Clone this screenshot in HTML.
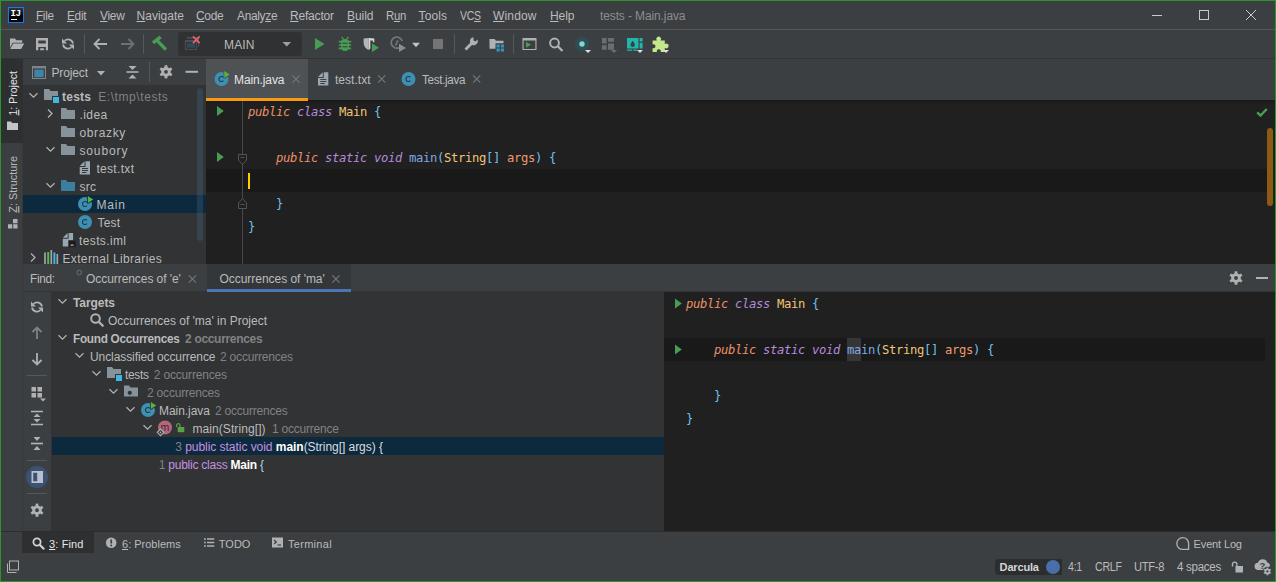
<!DOCTYPE html>
<html lang="en"><head><meta charset="utf-8"><title>tests - Main.java</title>
<style>
html,body{margin:0;padding:0;background:#3c3f41;}
body{width:1276px;height:582px;overflow:hidden;position:relative;font-family:'Liberation Sans', sans-serif;font-size:12px;color:#bbbbbb;}
.b{position:absolute;}
.t{position:absolute;white-space:pre;line-height:16px;font-family:'Liberation Sans', sans-serif;transform-origin:0 0;}
.t u{text-decoration:underline;text-underline-offset:1px;text-decoration-thickness:1px;}
.c{position:absolute;white-space:pre;line-height:23px;font-family:'DejaVu Sans Mono', 'Liberation Mono', monospace;font-size:12.2px;letter-spacing:-0.338px;}
svg{position:absolute;left:0;top:0;overflow:visible;}
</style></head><body>
<div class="b" style="left:1px;top:29px;width:1274px;height:1px;background:#555555;"></div>
<div class="b" style="left:1px;top:58px;width:1274px;height:1px;background:#323436;"></div>
<div class="b" style="left:178px;top:32px;width:124px;height:24px;background:#2f3133;border-radius:3px;"></div>
<div class="b" style="left:1px;top:59px;width:22px;height:84px;background:#2d2f30;"></div>
<div class="b" style="left:22px;top:143px;width:1px;height:388px;background:#37393b;"></div>
<div class="b" style="left:23px;top:85px;width:183px;height:179px;background:#313335;"></div>
<div class="b" style="left:23px;top:195px;width:183px;height:18px;background:#0d293e;"></div>
<div class="b" style="left:197px;top:88px;width:6px;height:153px;background:rgba(70,100,135,0.33);border-radius:3px;"></div>
<div class="b" style="left:206px;top:59px;width:102px;height:41px;background:#4e5254;"></div>
<div class="b" style="left:206px;top:100px;width:1069px;height:164px;background:#202020;"></div>
<div class="b" style="left:206px;top:100px;width:1069px;height:4px;background:linear-gradient(#1a1a1a,#1d1d1d 60%,#202020);"></div>
<div class="b" style="left:206px;top:98px;width:102px;height:3px;background:#f99a0e;"></div>
<div class="b" style="left:206px;top:169px;width:1061px;height:23px;background:#191919;"></div>
<div class="b" style="left:242px;top:101px;width:1px;height:163px;background:#484848;"></div>
<div class="b" style="left:248px;top:173px;width:2px;height:16px;background:#ffcc00;"></div>
<div class="b" style="left:1267.2px;top:127.7px;width:6px;height:78.5px;background:#8c5a12;border-radius:3px;"></div>
<div class="b" style="left:207px;top:264px;width:144px;height:28px;background:#34373a;"></div>
<div class="b" style="left:207px;top:289px;width:144px;height:3px;background:#4a77b4;"></div>
<div class="b" style="left:23px;top:291px;width:184px;height:1px;background:#323436;"></div>
<div class="b" style="left:351px;top:291px;width:924px;height:1px;background:#323436;"></div>
<div class="b" style="left:51px;top:292px;width:613px;height:239px;background:#313335;"></div>
<div class="b" style="left:52px;top:437px;width:612px;height:18px;background:#0d293e;"></div>
<div class="b" style="left:664px;top:292px;width:611px;height:239px;background:#202020;"></div>
<div class="b" style="left:664px;top:338px;width:601px;height:23px;background:#191919;"></div>
<div class="b" style="left:847px;top:338px;width:14px;height:23px;background:#363636;"></div>
<div class="b" style="left:1px;top:531px;width:1274px;height:1px;background:#2b2d2e;"></div>
<div class="b" style="left:22px;top:532px;width:72px;height:21px;background:#2d2f30;"></div>
<div class="b" style="left:995px;top:559px;width:67px;height:16px;background:#2b2d2f;border-radius:4px 0 0 4px;"></div>
<div class="b" style="left:0;top:0;width:1274px;height:580px;border:1px solid #2a972b;"></div>
<span class="t" style="left:36.00px;top:7.84px;font-size:12px;letter-spacing:-0.300px;color:#bbbbbb;transform:scaleX(0.9759);"><u>F</u>ile</span>
<span class="t" style="left:67.00px;top:7.84px;font-size:12px;letter-spacing:-0.300px;color:#bbbbbb;transform:scaleX(0.9855);"><u>E</u>dit</span>
<span class="t" style="left:99.75px;top:7.84px;font-size:12px;letter-spacing:-0.300px;color:#bbbbbb;transform:scaleX(0.9941);"><u>V</u>iew</span>
<span class="t" style="left:136.50px;top:7.84px;font-size:12px;letter-spacing:0.018px;color:#bbbbbb;"><u>N</u>avigate</span>
<span class="t" style="left:196.00px;top:7.84px;font-size:12px;letter-spacing:-0.300px;color:#bbbbbb;transform:scaleX(0.9987);"><u>C</u>ode</span>
<span class="t" style="left:237.00px;top:7.84px;font-size:12px;letter-spacing:-0.300px;color:#bbbbbb;transform:scaleX(0.9901);">Analy<u>z</u>e</span>
<span class="t" style="left:290.00px;top:7.84px;font-size:12px;letter-spacing:-0.194px;color:#bbbbbb;"><u>R</u>efactor</span>
<span class="t" style="left:347.00px;top:7.84px;font-size:12px;letter-spacing:-0.047px;color:#bbbbbb;"><u>B</u>uild</span>
<span class="t" style="left:386.00px;top:7.84px;font-size:12px;letter-spacing:-0.300px;color:#bbbbbb;transform:scaleX(0.9456);">R<u>u</u>n</span>
<span class="t" style="left:418.50px;top:7.84px;font-size:12px;letter-spacing:0.121px;color:#bbbbbb;"><u>T</u>ools</span>
<span class="t" style="left:460.00px;top:7.84px;font-size:12px;letter-spacing:-0.300px;color:#bbbbbb;transform:scaleX(0.8718);">VC<u>S</u></span>
<span class="t" style="left:493.00px;top:7.84px;font-size:12px;letter-spacing:0.163px;color:#bbbbbb;"><u>W</u>indow</span>
<span class="t" style="left:550.00px;top:7.84px;font-size:12px;letter-spacing:-0.062px;color:#bbbbbb;"><u>H</u>elp</span>
<span class="t" style="left:600.00px;top:7.84px;font-size:12px;letter-spacing:-0.117px;color:#8b8e90;">tests - Main.java</span>
<span class="t" style="left:224.00px;top:37.14px;font-size:12px;letter-spacing:0.167px;color:#bbbbbb;">MAIN</span>
<span class="t" style="left:51.50px;top:64.84px;font-size:12px;letter-spacing:-0.143px;color:#bbbbbb;">Project</span>
<span class="t" style="left:62.00px;top:88.84px;font-size:12px;letter-spacing:0.246px;color:#bbbbbb;font-weight:700;">tests</span>
<span class="t" style="left:98.20px;top:88.84px;font-size:12px;letter-spacing:0.576px;color:#7f8385;">E:\tmp\tests</span>
<span class="t" style="left:79.40px;top:106.84px;font-size:12px;letter-spacing:0.442px;color:#bbbbbb;">.idea</span>
<span class="t" style="left:79.40px;top:124.84px;font-size:12px;letter-spacing:0.645px;color:#bbbbbb;">obrazky</span>
<span class="t" style="left:79.40px;top:142.84px;font-size:12px;letter-spacing:0.883px;color:#bbbbbb;">soubory</span>
<span class="t" style="left:96.40px;top:160.84px;font-size:12px;letter-spacing:0.322px;color:#bbbbbb;">test.txt</span>
<span class="t" style="left:79.40px;top:178.84px;font-size:12px;letter-spacing:0.300px;color:#bbbbbb;">src</span>
<span class="t" style="left:96.40px;top:196.84px;font-size:12px;letter-spacing:0.861px;color:#bbbbbb;">Main</span>
<span class="t" style="left:97.50px;top:214.84px;font-size:12px;letter-spacing:0.161px;color:#bbbbbb;">Test</span>
<span class="t" style="left:79.00px;top:232.84px;font-size:12px;letter-spacing:0.373px;color:#bbbbbb;">tests.iml</span>
<span class="t" style="left:62.50px;top:250.84px;font-size:12px;letter-spacing:0.343px;color:#bbbbbb;">External Libraries</span>
<span class="t" style="left:234.00px;top:72.14px;font-size:12px;letter-spacing:-0.107px;color:#e4e4e4;">Main.java</span>
<span class="t" style="left:335.00px;top:72.14px;font-size:12px;letter-spacing:0.022px;color:#bbbbbb;">test.txt</span>
<span class="t" style="left:422.00px;top:72.14px;font-size:12px;letter-spacing:-0.300px;color:#bbbbbb;transform:scaleX(0.9675);">Test.java</span>
<span class="t" style="left:29.50px;top:270.54px;font-size:12px;letter-spacing:-0.300px;color:#bbbbbb;transform:scaleX(0.9809);">Find:</span>
<span class="t" style="left:86.00px;top:270.54px;font-size:12px;letter-spacing:-0.062px;color:#bbbbbb;">Occurrences of &#x27;e&#x27;</span>
<span class="t" style="left:219.50px;top:270.54px;font-size:12px;letter-spacing:-0.036px;color:#bbbbbb;">Occurrences of &#x27;ma&#x27;</span>
<span class="t" style="left:73.00px;top:295.04px;font-size:12px;letter-spacing:-0.078px;color:#bbbbbb;font-weight:700;">Targets</span>
<span class="t" style="left:108.00px;top:313.04px;font-size:12px;letter-spacing:-0.011px;color:#bbbbbb;">Occurrences of &#x27;ma&#x27; in Project</span>
<span class="t" style="left:73.00px;top:331.04px;font-size:12px;letter-spacing:-0.300px;color:#bbbbbb;transform:scaleX(0.9846);font-weight:700;">Found Occurrences</span>
<span class="t" style="left:185.40px;top:331.04px;font-size:12px;letter-spacing:-0.300px;color:#7f8385;transform:scaleX(0.9975);font-weight:700;">2 occurrences</span>
<span class="t" style="left:90.00px;top:349.04px;font-size:12px;letter-spacing:-0.086px;color:#bbbbbb;">Unclassified occurrence</span>
<span class="t" style="left:220.00px;top:349.04px;font-size:12px;letter-spacing:-0.198px;color:#7f8385;">2 occurrences</span>
<span class="t" style="left:125.00px;top:367.04px;font-size:12px;letter-spacing:-0.300px;color:#bbbbbb;transform:scaleX(0.9858);">tests</span>
<span class="t" style="left:153.80px;top:367.04px;font-size:12px;letter-spacing:-0.181px;color:#7f8385;">2 occurrences</span>
<span class="t" style="left:147.00px;top:385.04px;font-size:12px;letter-spacing:-0.198px;color:#7f8385;">2 occurrences</span>
<span class="t" style="left:159.00px;top:403.04px;font-size:12px;letter-spacing:-0.045px;color:#bbbbbb;">Main.java</span>
<span class="t" style="left:215.00px;top:403.04px;font-size:12px;letter-spacing:-0.223px;color:#7f8385;">2 occurrences</span>
<span class="t" style="left:192.40px;top:421.04px;font-size:12px;letter-spacing:0.090px;color:#bbbbbb;">main(String[])</span>
<span class="t" style="left:272.00px;top:421.04px;font-size:12px;letter-spacing:-0.216px;color:#7f8385;">1 occurrence</span>
<span class="t" style="left:49.00px;top:535.69px;font-size:11px;letter-spacing:0.143px;color:#e8e8e8;"><u>3</u>: Find</span>
<span class="t" style="left:122.00px;top:535.69px;font-size:11px;letter-spacing:-0.000px;color:#bbbbbb;"><u>6</u>: Problems</span>
<span class="t" style="left:218.80px;top:535.69px;font-size:11px;letter-spacing:0.007px;color:#bbbbbb;">TODO</span>
<span class="t" style="left:288.00px;top:535.69px;font-size:11px;letter-spacing:0.289px;color:#bbbbbb;">Terminal</span>
<span class="t" style="left:1193.60px;top:535.69px;font-size:11px;letter-spacing:-0.143px;color:#bbbbbb;">Event Log</span>
<span class="t" style="left:999.60px;top:559.19px;font-size:11px;letter-spacing:-0.160px;color:#d6d6d6;font-weight:700;">Darcula</span>
<span class="t" style="left:1067.80px;top:558.84px;font-size:12px;letter-spacing:-0.300px;color:#bbbbbb;transform:scaleX(0.8827);">4:1</span>
<span class="t" style="left:1095.00px;top:558.84px;font-size:12px;letter-spacing:-0.300px;color:#bbbbbb;transform:scaleX(0.8869);">CRLF</span>
<span class="t" style="left:1134.00px;top:558.84px;font-size:12px;letter-spacing:-0.300px;color:#bbbbbb;transform:scaleX(0.9299);">UTF-8</span>
<span class="t" style="left:1176.50px;top:558.84px;font-size:12px;letter-spacing:-0.300px;color:#bbbbbb;transform:scaleX(0.9623);">4 spaces</span>
<span class="t" style="left:175.30px;top:439.04px;font-size:12px;letter-spacing:-0.043px;"><span style="color:#7f8385;">3 </span><span style="color:#c592e0;">public static void </span><span style="color:#ffffff;font-weight:700;">main</span><span style="color:#d8dde0;">(String[] args) {</span></span>
<span class="t" style="left:158.80px;top:457.04px;font-size:12px;letter-spacing:-0.244px;"><span style="color:#7f8385;">1 </span><span style="color:#c592e0;">public class </span><span style="color:#ffffff;font-weight:700;">Main</span><span style="color:#9fd6e8;"> {</span></span>
<span class="c" style="left:248.00px;top:101.08px"><span style="color:#ec9069;font-style:italic;">public</span><span style="color:#bbbbbb;"> </span><span style="color:#b58bdc;font-style:italic;">class</span><span style="color:#bbbbbb;"> </span><span style="color:#f2c477;">Main</span><span style="color:#bbbbbb;"> </span><span style="color:#6dc2ee;">{</span></span>
<span class="c" style="left:276.00px;top:147.08px"><span style="color:#ec9069;font-style:italic;">public</span><span style="color:#bbbbbb;"> </span><span style="color:#b58bdc;font-style:italic;">static</span><span style="color:#bbbbbb;"> </span><span style="color:#b58bdc;font-style:italic;">void</span><span style="color:#bbbbbb;"> </span><span style="color:#7fa7e6;">main</span><span style="color:#6dc2ee;">(</span><span style="color:#f2c477;">String</span><span style="color:#6dc2ee;">[]</span><span style="color:#bbbbbb;"> </span><span style="color:#ee9a6f;">args</span><span style="color:#6dc2ee;">)</span><span style="color:#bbbbbb;"> </span><span style="color:#6dc2ee;">{</span></span>
<span class="c" style="left:276.00px;top:193.08px"><span style="color:#6dc2ee;">}</span></span>
<span class="c" style="left:248.00px;top:216.08px"><span style="color:#6dc2ee;">}</span></span>
<span class="c" style="left:686.00px;top:293.08px"><span style="color:#ec9069;font-style:italic;">public</span><span style="color:#bbbbbb;"> </span><span style="color:#b58bdc;font-style:italic;">class</span><span style="color:#bbbbbb;"> </span><span style="color:#f2c477;">Main</span><span style="color:#bbbbbb;"> </span><span style="color:#6dc2ee;">{</span></span>
<span class="c" style="left:714.00px;top:339.08px"><span style="color:#ec9069;font-style:italic;">public</span><span style="color:#bbbbbb;"> </span><span style="color:#b58bdc;font-style:italic;">static</span><span style="color:#bbbbbb;"> </span><span style="color:#b58bdc;font-style:italic;">void</span><span style="color:#bbbbbb;"> </span><span style="color:#7fa7e6;">main</span><span style="color:#6dc2ee;">(</span><span style="color:#f2c477;">String</span><span style="color:#6dc2ee;">[]</span><span style="color:#bbbbbb;"> </span><span style="color:#ee9a6f;">args</span><span style="color:#6dc2ee;">)</span><span style="color:#bbbbbb;"> </span><span style="color:#6dc2ee;">{</span></span>
<span class="c" style="left:714.00px;top:385.08px"><span style="color:#6dc2ee;">}</span></span>
<span class="c" style="left:686.00px;top:408.08px"><span style="color:#6dc2ee;">}</span></span>
<svg width="1276" height="582" viewBox="0 0 1276 582">
<defs><linearGradient id="lg" x1="0" y1="0" x2="0" y2="1"><stop offset="0" stop-color="#3a3a3a"/><stop offset="0.55" stop-color="#000"/></linearGradient></defs>
<rect x="8.5" y="7.5" width="15" height="15" fill="url(#lg)" stroke="#0f7cf5" stroke-width="1"/>
<rect x="11" y="19" width="6" height="1" fill="#fff"/>
<text x="10.6" y="16.2" font-family="'Liberation Mono', monospace" font-weight="700" font-size="9.2" fill="#fff" letter-spacing="-0.7">IJ</text>
<path d="M1152,15.5 h10" stroke="#c9cacb" stroke-width="1"/>
<rect x="1199.5" y="10.5" width="9" height="9" fill="none" stroke="#c9cacb" stroke-width="1"/>
<path d="M1246,10 L1256,20 M1256,10 L1246,20" stroke="#c9cacb" stroke-width="1" fill="none"/>
<path d="M10,38.5 h5 l1.2,1.8 h6 v2.4 h-9.6 l-2.6,5 z" fill="#afb1b3"/><path d="M13.2,43.5 h11 l-3,5.5 h-11 z" fill="#afb1b3"/>
<path fill-rule="evenodd" d="M36,38 h12 v12.2 h-12 z M38.3,40.5 v3.1 h7.5 v-3.1 z M38.3,46.9 v3.3 h1.9 v-2 h3.7 v2 h1.9 v-3.3 z" fill="#afb1b3"/>
<path d="M73.0,43.5 A5.0,5.0 0 0 0 64.6,40.8" fill="none" stroke="#afb1b3" stroke-width="1.8"/><path d="M62,38.5 v5 h5 z" fill="#afb1b3"/><path d="M63.0,44.5 A5.0,5.0 0 0 0 71.4,47.2" fill="none" stroke="#afb1b3" stroke-width="1.8"/><path d="M74,49.5 v-5 h-5 z" fill="#afb1b3"/>
<rect x="84" y="34" width="1" height="20" fill="#555759"/>
<path d="M94.5,44 h12.5 M99.5,39 L94.5,44 L99.5,49" fill="none" stroke="#afb1b3" stroke-width="1.8"/>
<path d="M133.5,44 h-12.5 M128.5,39 L133.5,44 L128.5,49" fill="none" stroke="#6e7173" stroke-width="1.8"/>
<rect x="143" y="34" width="1" height="20" fill="#555759"/>
<path d="M157.5,40.8 L165.9,49.6" stroke="#499c54" stroke-width="3.4"/><path d="M153,42.8 L160.6,36.9" stroke="#499c54" stroke-width="3.4"/>
<path d="M187,37.8 h12" stroke="#4e5254" stroke-width="1.6"/><path d="M198.5,38 v9" stroke="#4e5254" stroke-width="1"/>
<rect x="185.4" y="41" width="11" height="8.4" fill="#2f3133" stroke="#4e5254" stroke-width="1"/><rect x="184.9" y="40.2" width="12" height="1.9" fill="#4e5254"/><rect x="187" y="43.1" width="8" height="4.7" fill="#2e4957"/>
<path d="M193,36.4 L199.7,43.1 M199.7,36.4 L193,43.1" stroke="#e5606b" stroke-width="1.8"/>
<path d="M282.5,42 h8.5 l-4.25,4.5 z" fill="#9da0a2"/>
<path d="M315,38 L324.5,44.0 L315,50 z" fill="#499c54"/>
<path d="M341,43 a4,4 0 0 1 8,0 v4 a4,4 0 0 1 -8,0 z" fill="#499c54"/><path d="M338.8,41.6 h12.4 M338.8,45 h12.4 M338.8,48.4 h12.4" stroke="#499c54" stroke-width="1.6"/><path d="M341.6,36.9 L343.6,39.6 M348.4,36.9 L346.4,39.6" stroke="#499c54" stroke-width="1.3"/><path d="M342.4,43.3 h5.2 M342.4,46.7 h5.2" stroke="#3c3f41" stroke-width="1.1"/>
<path d="M363.6,38.6 L368.6,38 v12 q-5,-2.2 -5,-8 z" fill="#b4b6b8"/><path d="M368.6,38 L374.3,38.6 v3.6 h-1.4 v-1.8 h-2.6 v8 l-1.7,1.6 z" fill="#d6d7d8"/>
<path d="M372,43.4 L379,47.699999999999996 L372,52.0 z" fill="#499c54"/>
<path d="M399.6,47.45 A5.6,5.6 0 1 1 402.2,41.15" fill="none" stroke="#747779" stroke-width="1.7"/><path d="M397.8,40.2 L395.6,45.6" fill="none" stroke="#747779" stroke-width="1.5"/>
<path d="M399,43.7 L406,47.900000000000006 L399,52.1 z" fill="#8a8c8e"/>
<path d="M412,42.8 h8 l-4.0,4.4 z" fill="#c0c2c3"/>
<rect x="433" y="39" width="10" height="10" fill="#737577"/>
<rect x="454" y="34" width="1" height="20" fill="#555759"/>
<path d="M465.5,49.5 L472.5,42.5" stroke="#afb1b3" stroke-width="2.8"/><path d="M477.5,39.5 A4,4 0 1 1 473.5,37.2 L473.6,40.4 L475.6,41.4 z" fill="#afb1b3"/>
<path d="M489.5,39 h5 l1.5,1.8 h7.5 v2.4 h-8 v5.6 h-6 z" fill="#afb1b3"/>
<path d="M496.5,44.5 h3.2 v3 h-3.2z M500.8,44.5 h3.2 v3 h-3.2z M496.5,48.5 h3.2 v3 h-3.2z M500.8,48.5 h3.2 v3 h-3.2z" fill="#3592c4"/>
<rect x="513" y="34" width="1" height="20" fill="#555759"/>
<path fill-rule="evenodd" d="M522.5,38 h14 v12 h-14 z M523.6,40.6 v8.3 h11.8 v-8.3 z" fill="#afb1b3"/>
<path d="M526,41.8 L531,44.8 L526,47.8 z" fill="#499c54"/>
<circle cx="554.5" cy="43" r="4.4" fill="none" stroke="#afb1b3" stroke-width="2"/><path d="M557.80,46.30 L562.50,51.00" stroke="#afb1b3" stroke-width="2.3"/>
<circle cx="582" cy="44" r="7.3" fill="#2f4d54"/><circle cx="582" cy="44" r="2.7" fill="#82d6d2"/>
<path d="M585,50 h6 l-3,3 z" fill="#e0e0e0"/>
<path d="M602,38 h4.6 v5.4 h-4.6z M608,38 h6 v3.8 h-6z M602,45.2 h4.6 v4.6 h-4.6z M608,43.6 h6 v6.2 h-6z" fill="#6b6e70"/>
<path d="M611,50 h6 l-3,3 z" fill="#6b6e70"/>
<path fill-rule="evenodd" d="M627,38 h11.5 v10.5 h-11.5z M632.7,40.8 q-2.2,2.6 -2.2,4 a2.2,2.2 0 0 0 4.4,0 q0,-1.4 -2.2,-4z" fill="#1fb6ae"/><path d="M639.6,38 h3 v3.6 h-3z M639.6,42.8 h3 v5.7 h-3z M627,49.6 h5.2 v1.2 h-5.2z M633.2,49.6 h4 v1.2 h-4z" fill="#1fb6ae"/>
<path d="M637,50 h6 l-3,3 z" fill="#e0e0e0"/>
<path d="M652.6,40.6 h4.2 a2.4,2.4 0 1 1 3.8,0 h4.2 v3.4 a2.4,2.4 0 1 1 0,3.8 v4.2 h-4.2 a2,2 0 1 0 -3.6,0 h-4.4 v-4 a2,2 0 1 0 0,-3.6 z" fill="#c3e88d"/>
<path d="M663,50 h6 l-3,3 z" fill="#e0e0e0"/>
<text transform="translate(17.2,115.5) rotate(-90)" font-family="'Liberation Sans', sans-serif" font-size="11" fill="#e4e4e4" textLength="44.5" lengthAdjust="spacingAndGlyphs"><tspan text-decoration="underline">1</tspan>: Project</text>
<path d="M7,121.5 h4 l1.3,1.6 h5.7 v6.9 h-11 z" fill="#c2c4c5"/>
<text transform="translate(17.2,212.7) rotate(-90)" font-family="'Liberation Sans', sans-serif" font-size="11" fill="#bbbbbb" textLength="56.7" lengthAdjust="spacingAndGlyphs"><tspan text-decoration="underline">Z</tspan>: Structure</text>
<path d="M13,219 h4.5 v4.2 h-4.5z M8,224.2 h4.2 v4.3 h-4.2z M13.2,224.2 h4.3 v4.3 h-4.3z" fill="#afb1b3"/>
<rect x="32.5" y="66.5" width="13" height="12" fill="#3c3f41" stroke="#7e8487" stroke-width="1"/><rect x="32" y="66" width="14" height="2.4" fill="#7e8487"/><rect x="34.3" y="69.6" width="9.4" height="7.6" fill="#3a85a8"/>
<path d="M97,71 h8 l-4.0,4.5 z" fill="#afb1b3"/>
<path d="M126.5,72 h12" stroke="#afb1b3" stroke-width="1.6"/><path d="M128.5,66 h8 l-4,4z M128.5,78.5 h8 l-4,-4z" fill="#afb1b3"/>
<rect x="149" y="62" width="1" height="20" fill="#555759"/>
<path d="M166.00,75.15 L166.00,78.40" stroke="#afb1b3" stroke-width="2.77"/><path d="M163.10,73.47 L160.28,75.10" stroke="#afb1b3" stroke-width="2.77"/><path d="M163.10,70.13 L160.28,68.50" stroke="#afb1b3" stroke-width="2.77"/><path d="M166.00,68.45 L166.00,65.20" stroke="#afb1b3" stroke-width="2.77"/><path d="M168.90,70.13 L171.72,68.50" stroke="#afb1b3" stroke-width="2.77"/><path d="M168.90,73.47 L171.72,75.10" stroke="#afb1b3" stroke-width="2.77"/><circle cx="166" cy="71.8" r="3.35" fill="none" stroke="#afb1b3" stroke-width="2.87"/>
<path d="M185.5,71.8 h12.5" stroke="#afb1b3" stroke-width="2"/>
<path d="M29.5,93.2 L33.5,97.2 L37.5,93.2" fill="none" stroke="#afb1b3" stroke-width="1.3"/>
<path d="M44,89 h5 l1.6,2 h7.4 v9 h-14 z" fill="#87939a"/>
<rect x="52.5" y="96.5" width="7" height="7" fill="#40b6e0" stroke="#313335" stroke-width="1"/>
<path d="M48,109.5 L52,113.5 L48,117.5" fill="none" stroke="#afb1b3" stroke-width="1.3"/>
<path d="M61,108 h5 l1.6,2 h7.4 v9 h-14 z" fill="#87939a"/>
<path d="M61,126 h5 l1.6,2 h7.4 v9 h-14 z" fill="#87939a"/>
<path d="M46.5,147.2 L50.5,151.2 L54.5,147.2" fill="none" stroke="#afb1b3" stroke-width="1.3"/>
<path d="M61,144 h5 l1.6,2 h7.4 v9 h-14 z" fill="#87939a"/>
<path d="M79.7,166.0 L84.5,161.2 V166.0 z" fill="#9aa7b0"/><path d="M85.5,161.2 H90.0 V174.6 H79.7 V167.0 H85.5 z" fill="#9aa7b0"/><path d="M82.0,168.5 h6 M82.0,170.5 h6 M82.0,172.5 h4.5" stroke="#313335" stroke-width="1"/>
<path d="M46.5,183.2 L50.5,187.2 L54.5,183.2" fill="none" stroke="#afb1b3" stroke-width="1.3"/>
<path d="M61,180 h5 l1.6,2 h7.4 v9 h-14 z" fill="#3a7fa0"/>
<circle cx="85" cy="204" r="7" fill="#3d8fb3"/><path d="M86.9,202.4 A2.5,2.5 0 1 0 86.9,205.6" fill="none" stroke="#263942" stroke-width="1.15"/><path d="M87.8,196 L93.2,199.5 L87.8,203 z" fill="#57b53f" stroke="#0d293e" stroke-width="1.6" paint-order="stroke" stroke-linejoin="round"/>
<circle cx="85" cy="222" r="7" fill="#3d8fb3"/><path d="M86.9,220.4 A2.5,2.5 0 1 0 86.9,223.6" fill="none" stroke="#263942" stroke-width="1.15"/>
<path d="M62.8,237.8 L67.6,233 V237.8 z" fill="#9aa7b0"/><path d="M68.6,233 H73.1 V246.4 H62.8 V238.8 H68.6 z" fill="#9aa7b0"/>
<rect x="68.7" y="240.6" width="7.3" height="6.6" fill="#1b1b1b" stroke="#313335" stroke-width="0.8"/><rect x="70.6" y="244.6" width="3" height="1" fill="#e0e0e0"/>
<path d="M31,253.5 L35,257.5 L31,261.5" fill="none" stroke="#afb1b3" stroke-width="1.3"/>
<path d="M45,252.5 v11.5 M51.3,250 v14 M57.3,254 v10" stroke="#9aa7b0" stroke-width="1.7"/><path d="M48.2,252 v12" stroke="#62b543" stroke-width="2"/><path d="M54.4,252.5 v11.5" stroke="#40b6e0" stroke-width="2"/>
<circle cx="221.5" cy="79" r="7" fill="#3d8fb3"/><path d="M223.4,77.4 A2.5,2.5 0 1 0 223.4,80.6" fill="none" stroke="#263942" stroke-width="1.15"/><path d="M224.3,71 L229.7,74.5 L224.3,78 z" fill="#57b53f" stroke="#4e5254" stroke-width="1.6" paint-order="stroke" stroke-linejoin="round"/>
<path d="M292.4,75.4 L299.6,82.6 M299.6,75.4 L292.4,82.6" stroke="#74787a" stroke-width="1.1" fill="none"/>
<path d="M318,77.0 L322.8,72.2 V77.0 z" fill="#9aa7b0"/><path d="M323.8,72.2 H328.3 V85.60000000000001 H318 V78.0 H323.8 z" fill="#9aa7b0"/><path d="M320.3,79.5 h6 M320.3,81.5 h6 M320.3,83.5 h4.5" stroke="#3c3f41" stroke-width="1"/>
<path d="M378.09999999999997,75.4 L385.3,82.6 M385.3,75.4 L378.09999999999997,82.6" stroke="#74787a" stroke-width="1.1" fill="none"/>
<circle cx="408.5" cy="79" r="7" fill="#3d8fb3"/><path d="M410.4,77.4 A2.5,2.5 0 1 0 410.4,80.6" fill="none" stroke="#263942" stroke-width="1.15"/>
<path d="M473.09999999999997,75.4 L480.3,82.6 M480.3,75.4 L473.09999999999997,82.6" stroke="#74787a" stroke-width="1.1" fill="none"/>
<path d="M217,106 L223.8,111.0 L217,116 z" fill="#499c54"/>
<path d="M217,152 L223.8,157.0 L217,162 z" fill="#499c54"/>
<path d="M238.5,154.5 h8 v5.5 l-4,4.5 l-4,-4.5 z" fill="#202020" stroke="#555" stroke-width="1"/><path d="M240.5,157.5 h4" stroke="#555" stroke-width="1"/>
<path d="M238.5,208.5 h8 v-5.5 l-4,-4.5 l-4,4.5 z" fill="#202020" stroke="#555" stroke-width="1"/><path d="M240.5,204.5 h4" stroke="#555" stroke-width="1"/>
<path d="M1257.2,112.4 l3.3,3.2 l6.3,-6.6" fill="none" stroke="#499c54" stroke-width="2.5"/>
<path d="M675,298.5 L681.8,303.5 L675,308.5 z" fill="#499c54"/>
<path d="M675,344.5 L681.8,349.5 L675,354.5 z" fill="#499c54"/>
<circle cx="79.2" cy="272.5" r="2.3" fill="none" stroke="#6e7173" stroke-width="1"/>
<path d="M188.8,275.4 L196.0,282.6 M196.0,275.4 L188.8,282.6" stroke="#74787a" stroke-width="1.1" fill="none"/>
<path d="M332.29999999999995,275.4 L339.5,282.6 M339.5,275.4 L332.29999999999995,282.6" stroke="#74787a" stroke-width="1.1" fill="none"/>
<path d="M1236.00,281.40 L1236.00,284.70" stroke="#afb1b3" stroke-width="2.82"/><path d="M1233.06,279.70 L1230.20,281.35" stroke="#afb1b3" stroke-width="2.82"/><path d="M1233.06,276.30 L1230.20,274.65" stroke="#afb1b3" stroke-width="2.82"/><path d="M1236.00,274.60 L1236.00,271.30" stroke="#afb1b3" stroke-width="2.82"/><path d="M1238.94,276.30 L1241.80,274.65" stroke="#afb1b3" stroke-width="2.82"/><path d="M1238.94,279.70 L1241.80,281.35" stroke="#afb1b3" stroke-width="2.82"/><circle cx="1236" cy="278" r="3.40" fill="none" stroke="#afb1b3" stroke-width="2.91"/>
<path d="M1256,278 h12" stroke="#afb1b3" stroke-width="2"/>
<path d="M42.0,306.5 A5.0,5.0 0 0 0 33.6,303.8" fill="none" stroke="#afb1b3" stroke-width="1.8"/><path d="M31,301.5 v5 h5 z" fill="#afb1b3"/><path d="M32.0,307.5 A5.0,5.0 0 0 0 40.4,310.2" fill="none" stroke="#afb1b3" stroke-width="1.8"/><path d="M43,312.5 v-5 h-5 z" fill="#afb1b3"/>
<path d="M37,339 v-11 M32.5,332 L37,327.5 L41.5,332" fill="none" stroke="#7f8385" stroke-width="1.8"/>
<path d="M37,353 v11 M32.5,360 L37,364.5 L41.5,360" fill="none" stroke="#afb1b3" stroke-width="1.8"/>
<rect x="27" y="375" width="20" height="1" fill="#55585a"/>
<path d="M31.5,387 h4.5 v4.5 h-4.5z M37.5,387 h4.5 v4.5 h-4.5z M31.5,393 h4.5 v4.5 h-4.5z M37.5,393 h4.5 v4.5 h-4.5z" fill="#afb1b3"/>
<path d="M40,398.5 h6 l-3,3 z" fill="#afb1b3"/>
<path d="M31,411.5 h12 M31,424.5 h12" stroke="#afb1b3" stroke-width="1.7"/><path d="M33.5,417 h7 l-3.5,-3.5z M33.5,419 h7 l-3.5,3.5z" fill="#afb1b3"/>
<path d="M31,443.5 h12" stroke="#afb1b3" stroke-width="1.7"/><path d="M33.5,437 h7 l-3.5,4z M33.5,450 h7 l-3.5,-4z" fill="#afb1b3"/>
<rect x="27" y="460" width="20" height="1" fill="#55585a"/>
<circle cx="37" cy="477" r="11" fill="#3c5272"/>
<path fill-rule="evenodd" d="M31.5,471 h11.5 v12 h-11.5z M33.2,472.7 v8.6 h4 v-8.6z" fill="#b9c0cc"/>
<rect x="27" y="493" width="20" height="1" fill="#55585a"/>
<path d="M37.00,513.55 L37.00,516.80" stroke="#afb1b3" stroke-width="2.77"/><path d="M34.10,511.87 L31.28,513.50" stroke="#afb1b3" stroke-width="2.77"/><path d="M34.10,508.53 L31.28,506.90" stroke="#afb1b3" stroke-width="2.77"/><path d="M37.00,506.85 L37.00,503.60" stroke="#afb1b3" stroke-width="2.77"/><path d="M39.90,508.53 L42.72,506.90" stroke="#afb1b3" stroke-width="2.77"/><path d="M39.90,511.87 L42.72,513.50" stroke="#afb1b3" stroke-width="2.77"/><circle cx="37" cy="510.2" r="3.35" fill="none" stroke="#afb1b3" stroke-width="2.87"/>
<path d="M58.5,299.2 L62.5,303.2 L66.5,299.2" fill="none" stroke="#afb1b3" stroke-width="1.3"/>
<circle cx="95.5" cy="318.5" r="4.3" fill="none" stroke="#afb1b3" stroke-width="2"/><path d="M98.72,321.73 L103.40,326.40" stroke="#afb1b3" stroke-width="2.3"/>
<path d="M58.5,335.2 L62.5,339.2 L66.5,335.2" fill="none" stroke="#afb1b3" stroke-width="1.3"/>
<path d="M75.5,353.2 L79.5,357.2 L83.5,353.2" fill="none" stroke="#afb1b3" stroke-width="1.3"/>
<path d="M92.5,371.2 L96.5,375.2 L100.5,371.2" fill="none" stroke="#afb1b3" stroke-width="1.3"/>
<path d="M107,367 h5 l1.6,2 h7.4 v9 h-14 z" fill="#87939a"/>
<rect x="115.5" y="374.5" width="7" height="7" fill="#40b6e0" stroke="#313335" stroke-width="1"/>
<path d="M109.5,389.2 L113.5,393.2 L117.5,389.2" fill="none" stroke="#afb1b3" stroke-width="1.3"/>
<path d="M124,385.5 h5 l1.6,2 h7.4 v9 h-14 z" fill="#87939a"/>
<circle cx="129.8" cy="392.8" r="2.1" fill="#313335"/>
<path d="M126.5,407.2 L130.5,411.2 L134.5,407.2" fill="none" stroke="#afb1b3" stroke-width="1.3"/>
<circle cx="148" cy="410" r="7" fill="#3d8fb3"/><path d="M149.9,408.4 A2.5,2.5 0 1 0 149.9,411.6" fill="none" stroke="#263942" stroke-width="1.15"/><path d="M150.8,402 L156.2,405.5 L150.8,409 z" fill="#57b53f" stroke="#313335" stroke-width="1.6" paint-order="stroke" stroke-linejoin="round"/>
<path d="M143.5,425.2 L147.5,429.2 L151.5,425.2" fill="none" stroke="#afb1b3" stroke-width="1.3"/>
<circle cx="165" cy="427.5" r="7" fill="#b5667a"/><text x="160.6" y="430.6" font-family="'Liberation Sans', sans-serif" font-size="10.5" fill="#3b2930">m</text>
<path d="M160.5,429 l3.3,3.3 l-3.3,3.3 l-3.3,-3.3z" fill="#313335" stroke="#a9b3ba" stroke-width="1.1"/><circle cx="160.5" cy="432.3" r="0.9" fill="#a9b3ba"/>
<rect x="177.7" y="427" width="6.6" height="5.2" fill="#5c9e4a"/><path d="M176.6,427 v-1.6 a1.7,1.7 0 0 1 3.4,0 v1.6" fill="none" stroke="#5c9e4a" stroke-width="1.2"/>
<circle cx="37" cy="542" r="3.6" fill="none" stroke="#d0d2d3" stroke-width="1.8"/><path d="M39.70,544.70 L44.20,549.20" stroke="#d0d2d3" stroke-width="2.1"/>
<circle cx="111.2" cy="542.7" r="5.3" fill="#afb1b3"/><rect x="110.4" y="539.5" width="1.7" height="4" fill="#3c3f41"/><rect x="110.4" y="544.6" width="1.7" height="1.7" fill="#3c3f41"/>
<path d="M204,539 h1.8 M207,539 h7.3 M204,542.5 h1.8 M207,542.5 h7.3 M204,546 h1.8 M207,546 h7.3" stroke="#afb1b3" stroke-width="1.6"/>
<rect x="272" y="537.5" width="11" height="10" fill="#afb1b3"/><path d="M274,540 l2.3,2 l-2.3,2" fill="none" stroke="#3c3f41" stroke-width="1.2"/><path d="M277.5,545 h3.5" stroke="#3c3f41" stroke-width="1.2"/>
<path d="M1188.6,549.4 v-6 a5.9,5.9 0 1 0 -5.9,6 z" fill="none" stroke="#afb1b3" stroke-width="1.3"/>
<path d="M7.5,563.5 v9 h9" fill="none" stroke="#afb1b3" stroke-width="1"/><rect x="9.5" y="561" width="9" height="9" fill="none" stroke="#afb1b3" stroke-width="1"/>
<circle cx="1053" cy="567" r="7" fill="#4a6ea9"/>
<rect x="1235.5" y="566" width="7.5" height="6.5" fill="#afb1b3"/><path d="M1232.5,566.5 v-2.2 a2.2,2.2 0 0 1 4.4,0 v1.7" fill="none" stroke="#afb1b3" stroke-width="1.4"/>
<path d="M1258.3,570 a3.6,3.6 0 0 1 -0.3,-7.2 a4.9,4.9 0 0 1 9.3,-0.4 a3.3,3.3 0 0 1 2.6,3.6 l-3.5,4 z" fill="#afb1b3"/>
<text x="1259.6" y="568.6" font-family="'Liberation Sans', sans-serif" font-weight="700" font-size="9.5" fill="#3c3f41">?</text>
<circle cx="1267.4" cy="571.4" r="4.6" fill="#3c3f41"/>
<path d="M1267.40,573.38 L1267.40,575.30" stroke="#afb1b3" stroke-width="1.64"/><path d="M1265.69,572.39 L1264.02,573.35" stroke="#afb1b3" stroke-width="1.64"/><path d="M1265.69,570.41 L1264.02,569.45" stroke="#afb1b3" stroke-width="1.64"/><path d="M1267.40,569.42 L1267.40,567.50" stroke="#afb1b3" stroke-width="1.64"/><path d="M1269.11,570.41 L1270.78,569.45" stroke="#afb1b3" stroke-width="1.64"/><path d="M1269.11,572.39 L1270.78,573.35" stroke="#afb1b3" stroke-width="1.64"/><circle cx="1267.4" cy="571.4" r="1.98" fill="none" stroke="#afb1b3" stroke-width="1.70"/>
</svg>
</body></html>
